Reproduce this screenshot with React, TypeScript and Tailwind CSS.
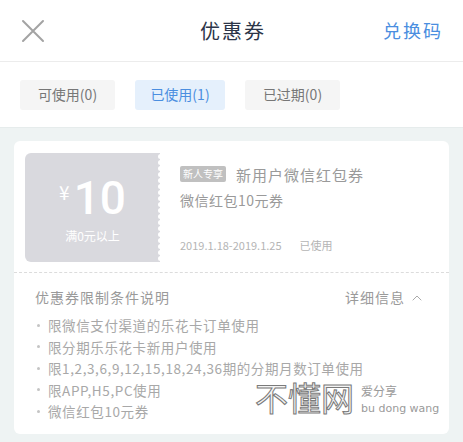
import { ChevronUp } from "lucide-react";

const RULES = [
  "限微信支付渠道的乐花卡订单使用",
  "限分期乐乐花卡新用户使用",
  "限1,2,3,6,9,12,15,18,24,36期的分期月数订单使用",
  "限APP,H5,PC使用",
  "微信红包10元券",
];

const TABS = [
  { id: "usable", label: "可使用(0)", width: "w-[95px]" },
  { id: "used", label: "已使用(1)", width: "w-[90px]" },
  { id: "expired", label: "已过期(0)", width: "w-[95px]" },
];

function CouponStub() {
  return (
    <div className="relative w-[135px] h-[109px] shrink-0 bg-[#d9d9de] rounded-l-[6px] flex flex-col items-center justify-center text-white">
      <div className="flex items-start mt-[2px]">
        <span className="text-[19px] leading-none mt-[7px] mr-[4px]">¥</span>
        <span className="text-[46px] leading-none font-medium font-['Roboto',sans-serif]">10</span>
      </div>
      <div className="mt-[9px] text-[12px] leading-none">满0元以上</div>
      {/* serrated edge */}
      <div className="absolute right-[-3px] top-0 bottom-0 flex flex-col justify-between py-[1px]">
        {Array.from({ length: 18 }).map((_, i) => (
          <span key={i} className="block w-[5px] h-[5px] rounded-full bg-white" />
        ))}
      </div>
    </div>
  );
}

export default function App() {
  const active = "used";

  return (
    <div className="relative w-[463px] h-[442px] overflow-hidden bg-[#eef3f3] font-['Noto_Sans_CJK_SC','Noto_Sans',sans-serif]">
      {/* header */}
      <div className="h-[62px] bg-white flex items-center justify-between px-[20px] border-b border-[#ececec]">
        <svg width="24" height="24" viewBox="0 0 24 24" className="ml-[1px]">
          <path d="M2 2 L22 22 M22 2 L2 22" stroke="#a3a3a3" strokeWidth="2" strokeLinecap="round" fill="none" />
        </svg>
        <div className="text-[20px] text-[#2c3548] tracking-[2px] ml-[38px]">优惠券</div>
        <div className="text-[18px] text-[#4a8ee0] tracking-[2px]">兑换码</div>
      </div>

      {/* tabs */}
      <div className="h-[66px] bg-white flex items-center gap-[20px] px-[20px] border-b border-[#e6ecec]">
        {TABS.map((tab) => (
          <div
            key={tab.id}
            className={`${tab.width} h-[30px] flex items-center justify-center text-[14px] rounded-[3px] ${
              tab.id === active ? "bg-[#e5f0fc] text-[#4a8ee0]" : "bg-[#f5f5f5] text-[#777]"
            }`}
          >
            {tab.label}
          </div>
        ))}
      </div>

      {/* coupon card */}
      <div className="mx-[14px] mt-[13px] bg-white rounded-[6px]">
        <div className="flex px-[11px] pt-[12px] pb-[10px]">
          <CouponStub />
          <div className="flex flex-col pl-[20px] pt-[13px] text-[#9a9a9a]">
            <div className="flex items-center">
              <span className="bg-[#c0c0c0] text-white text-[10px] leading-none px-[3px] py-[3px] rounded-[2px]">新人专享</span>
              <span className="ml-[10px] text-[15px] leading-none tracking-[1px]">新用户微信红包券</span>
            </div>
            <div className="mt-[11px] text-[14px] leading-none tracking-[0.5px]">微信红包10元券</div>
            <div className="mt-[33px] flex text-[11px] leading-none text-[#b5b5b5]">
              <span>2019.1.18-2019.1.25</span>
              <span className="ml-[18px]">已使用</span>
            </div>
          </div>
        </div>
        <div className="border-t border-dashed border-[#dcdcdc]" />
        <div className="px-[21px] pt-[14px] pb-[14px]">
          <div className="flex items-center justify-between text-[14px] text-[#9a9a9a]">
            <span className="tracking-[1px]">优惠券限制条件说明</span>
            <span className="flex items-center gap-[4px] mr-[3px] tracking-[1px]">
              详细信息
              <ChevronUp size={16} strokeWidth={1.5} className="text-[#aaa]" />
            </span>
          </div>
          <ul className="mt-[9px] flex flex-col gap-[5px]">
            {RULES.map((r) => (
              <li key={r} className="flex items-center text-[13.5px] leading-[16.5px] tracking-[0.6px] text-[#a8a8a8]">
                <span className="w-[3px] h-[3px] rounded-full bg-[#c4c4c4] mr-[8px] ml-[2px]" />
                {r}
              </li>
            ))}
          </ul>
        </div>
      </div>

      {/* watermark */}
      <div className="absolute left-[255px] top-[381px] flex items-end whitespace-nowrap pointer-events-none">
        <span className="text-[33px] leading-none text-[#f4f4f4] [-webkit-text-stroke:1px_#7a7a7a]">不懂网</span>
        <div className="ml-[7px] flex flex-col text-[#9a9a9a] leading-none">
          <span className="text-[12px] mb-[6px]">爱分享</span>
          <span className="text-[11px] font-['DejaVu_Sans',sans-serif]">bu dong wang</span>
        </div>
      </div>
    </div>
  );
}
